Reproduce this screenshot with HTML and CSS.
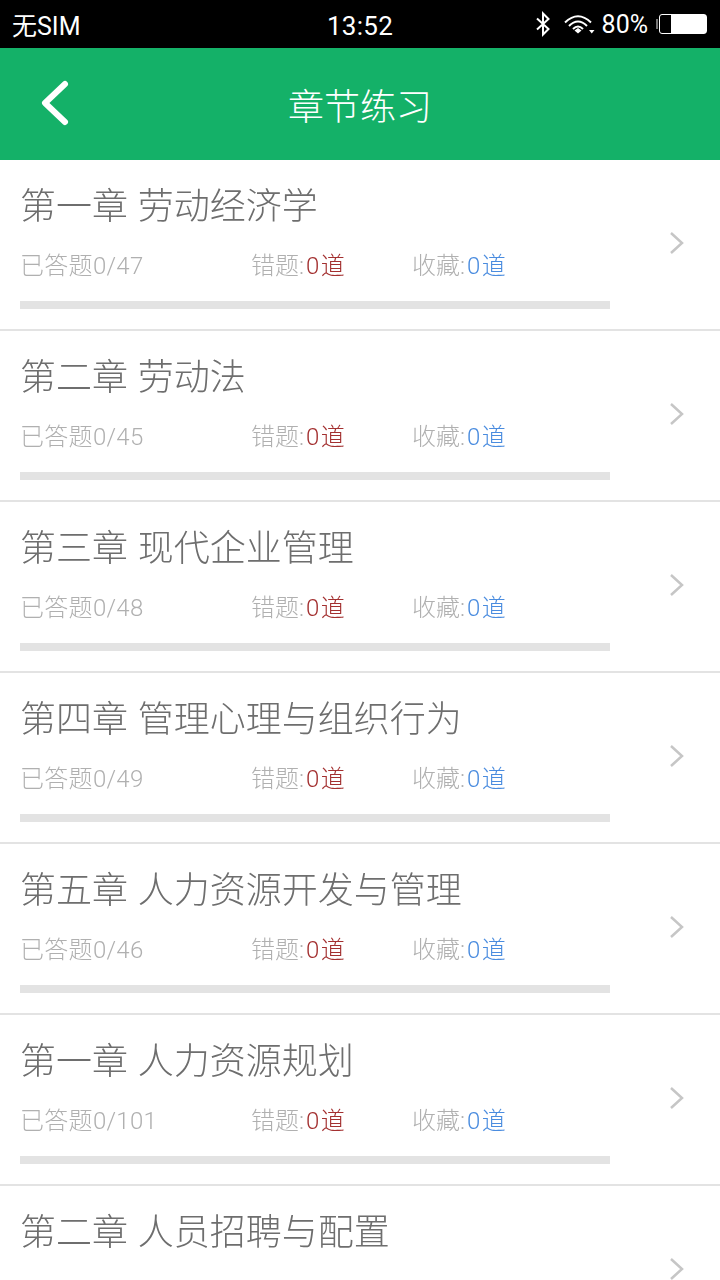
FILE: index.html
```html
<!DOCTYPE html>
<html lang="zh-CN">
<head>
    <meta charset="UTF-8">
    <meta name="viewport" content="width=device-width, initial-scale=1.0">
    <title>章节练习</title>
    <link rel="stylesheet" href="styles.css">
</head>
<body>
    <div class="status-bar">
        <span class="status-carrier">无SIM</span>
        <span class="status-time">13:52</span>
        <div class="status-right">
            <svg class="icon-bluetooth" width="16" height="26" viewBox="0 0 16 26">
                <path d="M2 7.5 L13.5 18 L8 23.5 V2.5 L13.5 8 L2 18.5" fill="none" stroke="#fff" stroke-width="2"/>
            </svg>
            <svg class="icon-wifi" width="31" height="20" viewBox="0 0 31 20">
                <path d="M1 8.500 Q14 -4 27 8.500" fill="none" stroke="#fff" stroke-width="2"/>
                <path d="M5 12 Q14 3 23 12" fill="none" stroke="#fff" stroke-width="2"/>
                <path d="M9 15 Q14 10 19 15" fill="none" stroke="#fff" stroke-width="2"/>
                <path d="M10.500 16.500 L14 14 L17.500 16.500 L14 19.500 Z" fill="#fff"/>
                <path d="M25 16 H30.500 L27.750 19.500 Z" fill="#fff"/>
            </svg>
            <span class="status-percent">80%</span>
            <div class="battery-nub"></div>
            <div class="battery"><div class="battery-fill"></div></div>
        </div>
    </div>

    <div class="nav-bar">
        <svg class="nav-back" width="30" height="48" viewBox="0 0 30 48">
            <path d="M25 5 L5 24 L25 43" fill="none" stroke="#fff" stroke-width="6" stroke-linecap="round" stroke-linejoin="round"/>
        </svg>
        <h1 class="nav-title">章节练习</h1>
    </div>

    <div class="chapter-list">
        <div class="chapter-row">
            <div class="chapter-main">
                <div class="chapter-title">第一章 劳动经济学</div>
                <div class="chapter-stats">
                    <span class="stat-done">已答题0/47</span>
                    <span class="stat-wrong">错题:<em class="num-red">0道</em></span>
                    <span class="stat-fav">收藏:<em class="num-blue">0道</em></span>
                </div>
                <div class="progress"></div>
            </div>
            <svg class="chevron" width="16" height="24" viewBox="0 0 16 24"><path d="M2 2 L13 12 L2 22" fill="none" stroke="#c6c6c6" stroke-width="2.500"/></svg>
        </div>
        <div class="chapter-row">
            <div class="chapter-main">
                <div class="chapter-title">第二章 劳动法</div>
                <div class="chapter-stats">
                    <span class="stat-done">已答题0/45</span>
                    <span class="stat-wrong">错题:<em class="num-red">0道</em></span>
                    <span class="stat-fav">收藏:<em class="num-blue">0道</em></span>
                </div>
                <div class="progress"></div>
            </div>
            <svg class="chevron" width="16" height="24" viewBox="0 0 16 24"><path d="M2 2 L13 12 L2 22" fill="none" stroke="#c6c6c6" stroke-width="2.500"/></svg>
        </div>
        <div class="chapter-row">
            <div class="chapter-main">
                <div class="chapter-title">第三章 现代企业管理</div>
                <div class="chapter-stats">
                    <span class="stat-done">已答题0/48</span>
                    <span class="stat-wrong">错题:<em class="num-red">0道</em></span>
                    <span class="stat-fav">收藏:<em class="num-blue">0道</em></span>
                </div>
                <div class="progress"></div>
            </div>
            <svg class="chevron" width="16" height="24" viewBox="0 0 16 24"><path d="M2 2 L13 12 L2 22" fill="none" stroke="#c6c6c6" stroke-width="2.500"/></svg>
        </div>
        <div class="chapter-row">
            <div class="chapter-main">
                <div class="chapter-title">第四章 管理心理与组织行为</div>
                <div class="chapter-stats">
                    <span class="stat-done">已答题0/49</span>
                    <span class="stat-wrong">错题:<em class="num-red">0道</em></span>
                    <span class="stat-fav">收藏:<em class="num-blue">0道</em></span>
                </div>
                <div class="progress"></div>
            </div>
            <svg class="chevron" width="16" height="24" viewBox="0 0 16 24"><path d="M2 2 L13 12 L2 22" fill="none" stroke="#c6c6c6" stroke-width="2.500"/></svg>
        </div>
        <div class="chapter-row">
            <div class="chapter-main">
                <div class="chapter-title">第五章 人力资源开发与管理</div>
                <div class="chapter-stats">
                    <span class="stat-done">已答题0/46</span>
                    <span class="stat-wrong">错题:<em class="num-red">0道</em></span>
                    <span class="stat-fav">收藏:<em class="num-blue">0道</em></span>
                </div>
                <div class="progress"></div>
            </div>
            <svg class="chevron" width="16" height="24" viewBox="0 0 16 24"><path d="M2 2 L13 12 L2 22" fill="none" stroke="#c6c6c6" stroke-width="2.500"/></svg>
        </div>
        <div class="chapter-row">
            <div class="chapter-main">
                <div class="chapter-title">第一章 人力资源规划</div>
                <div class="chapter-stats">
                    <span class="stat-done">已答题0/101</span>
                    <span class="stat-wrong">错题:<em class="num-red">0道</em></span>
                    <span class="stat-fav">收藏:<em class="num-blue">0道</em></span>
                </div>
                <div class="progress"></div>
            </div>
            <svg class="chevron" width="16" height="24" viewBox="0 0 16 24"><path d="M2 2 L13 12 L2 22" fill="none" stroke="#c6c6c6" stroke-width="2.500"/></svg>
        </div>
        <div class="chapter-row">
            <div class="chapter-main">
                <div class="chapter-title">第二章 人员招聘与配置</div>
            </div>
            <svg class="chevron" width="16" height="24" viewBox="0 0 16 24"><path d="M2 2 L13 12 L2 22" fill="none" stroke="#c6c6c6" stroke-width="2.500"/></svg>
        </div>
    </div>
</body>
</html>
```

FILE: styles.css
```css
html, body {
    margin: 0;
    padding: 0;
    height: 100%;
    overflow: hidden;
}

body {
    font-family: "Roboto", "Noto Sans CJK SC", sans-serif;
    font-weight: 300;
    background-color: #fff;
}

/* status bar */
.status-bar {
    height: 48px;
    background-color: #000;
    color: #fff;
    display: flex;
    align-items: center;
    justify-content: space-between;
    padding: 0 13px 0 12px;
    font-size: 25px;
    font-weight: 400;
    position: relative;
}

.status-time {
    position: absolute;
    left: 0;
    right: 0;
    top: 9px;
    line-height: 34px;
    text-align: center;
    font-size: 26px;
    letter-spacing: 0.3px;
}

.status-right {
    display: flex;
    align-items: center;
}

.icon-bluetooth {
    margin-right: 13px;
}

.icon-wifi {
    margin-right: 7px;
}

.status-percent {
    font-size: 25px;
    margin-right: 8px;
}

.battery-nub {
    width: 2px;
    height: 10px;
    background-color: #777;
    margin-right: 1px;
}

.battery {
    width: 48px;
    height: 20px;
    border: 1px solid #fff;
    border-radius: 3px;
    box-sizing: border-box;
    display: flex;
    justify-content: flex-end;
}

.battery-fill {
    width: 35px;
    background-color: #fff;
}

/* green title bar */
.nav-bar {
    height: 112px;
    background-color: #14b168;
    display: flex;
    align-items: center;
    justify-content: center;
    position: relative;
}

.nav-back {
    position: absolute;
    left: 40px;
    top: 31px;
}

.nav-title {
    margin: 0;
    color: #fff;
    font-size: 36px;
    font-weight: 300;
}

/* chapter rows */
.chapter-list {
    will-change: transform;
}

.chapter-row {
    height: 171px;
    box-sizing: border-box;
    border-bottom: 2px solid #e3e3e3;
    display: flex;
    align-items: center;
    padding: 0 35px 0 20px;
}

.chapter-main {
    width: 590px;
    height: 100%;
    display: flex;
    flex-direction: column;
}

.chapter-title {
    font-size: 36px;
    line-height: 40px;
    margin-top: 27px;
    color: #6e6e6e;
    word-spacing: 1px;
    white-space: nowrap;
}

.chapter-stats {
    display: flex;
    font-size: 24px;
    line-height: 32px;
    margin-top: 23px;
    color: #b0b0b0;
}

.chapter-stats em {
    font-style: normal;
    margin-left: 2px;
    letter-spacing: 1.5px;
}

.stat-done {
    width: 231px;
    letter-spacing: 0.3px;
}

.stat-wrong {
    width: 161px;
}

.num-red {
    color: #a33030;
}

.num-blue {
    color: #4a8cdf;
}

.progress {
    height: 8px;
    margin-top: 19px;
    background-color: #e3e3e3;
}

.chevron {
    margin-left: auto;
    margin-bottom: 4px;
}
```
